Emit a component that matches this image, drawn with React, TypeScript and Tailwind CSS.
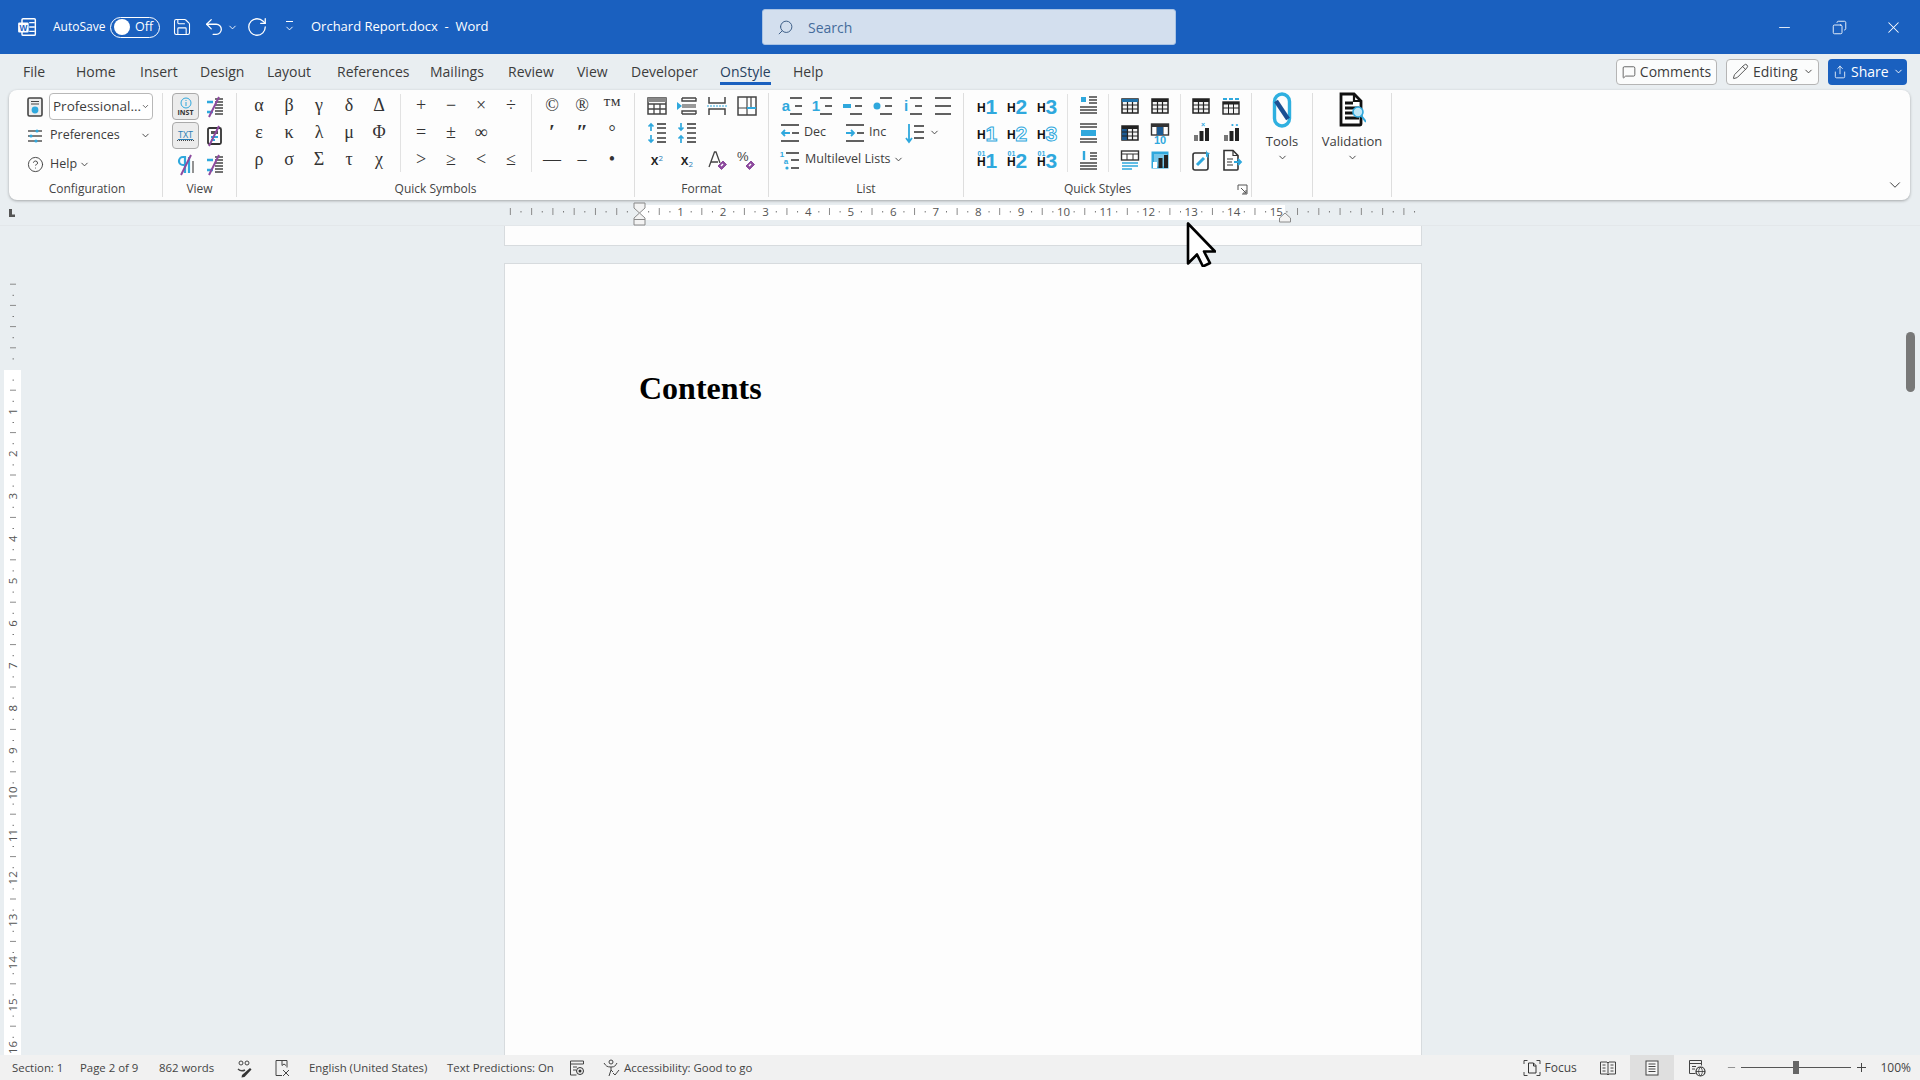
import React from "react";
import { ChevronDown, Save, Undo2, RotateCw, Search, Minus, X, Copy, MessageSquare, Pencil, Share, CircleHelp } from "lucide-react";

const D = "#3a3a3a";
const B = "#2fa8dd";
const P = "#8d4a9e";

function Svg({ s = 24, children, className }: { s?: number; children: React.ReactNode; className?: string }) {
  return <svg width={s} height={s} viewBox="0 0 24 24" fill="none" className={className}>{children}</svg>;
}
function Hl({ y, x1 = 8, x2 = 21, c = D, w = 1.6 }: { y: number; x1?: number; x2?: number; c?: string; w?: number }) {
  return <line x1={x1} x2={x2} y1={y} y2={y} stroke={c} strokeWidth={w} />;
}
const Sym = ({ c }: { c: string }) => (
  <div className={`flex items-center justify-center h-[27px] text-[#333] ${c === "′" || c === "″" ? "text-[21px] font-bold" : "text-[18px]"}`} style={{ fontFamily: "'Liberation Serif', serif" }}>{c}</div>
);
function Chev({ className = "" }: { className?: string }) {
  return <ChevronDown size={11} strokeWidth={2} className={className} />;
}
function Cell({ children }: { children: React.ReactNode }) {
  return <div className="flex items-center justify-center h-[27px]">{children}</div>;
}
function HIcon({ n, kind }: { n: number; kind: "solid" | "outline" | "num" }) {
  return (
    <Svg>
      <g style={{ fontFamily: "'Liberation Sans', sans-serif", fontWeight: 700 }}>
        <text x="2" y="18" fontSize="12" fill="#111">H</text>
        <text x="10.500" y="20" fontSize="21" fill={kind === "outline" ? "#fff" : B} stroke={kind === "outline" ? B : "none"} strokeWidth="1">{n}</text>
        {kind === "num" && <text x="2.500" y="8" fontSize="7" fill={B}>01</text>}
      </g>
    </Svg>
  );
}
function Table({ head = false, side = false }: { head?: boolean; side?: boolean }) {
  return (
    <Svg>
      <rect x="4" y="5" width="16" height="14" fill="#f4f4f4" stroke="#222" strokeWidth="1.5" />
      <rect x="4" y="5" width="16" height="3" fill={head ? "#1c6fa8" : "#222"} />
      {side && <rect x="4" y="8" width="6" height="11" fill="#1c5a92" />}
      <path d="M4 11h16M4 15h16M9.500 8v11M14.500 8v11" stroke="#222" strokeWidth="1.200" />
    </Svg>
  );
}
function Bars({ top, filled = false }: { top?: string; filled?: boolean }) {
  return (
    <Svg>
      {filled && <rect x="3.500" y="3.500" width="17" height="17" fill={B} />}
      {filled && <rect x="6" y="6" width="13" height="12.500" fill="#fff" opacity="0.35" />}
      <rect x="5" y="14" width="4" height="6" fill={filled ? "#fff" : "#777"} />
      <rect x="10.500" y="10" width="4" height="10" fill="#222" />
      <rect x="16" y="7" width="4" height="13" fill="#222" />
      {top && <text x="12" y="6" fontSize="7" fill={B} style={{ fontFamily: "'Liberation Sans', sans-serif", fontWeight: 700 }}>{top}</text>}
    </Svg>
  );
}
function Slash({ kind }: { kind: "lines" | "para" | "box" }) {
  return (
    <Svg>
      {kind === "lines" && <><path d="M13 4h8M13 7h8M13 10h8M13 13h8M13 16h8M13 19h8" stroke="#444" strokeWidth="1.300" /><path d="M5 7h6M5 17h6" stroke={B} strokeWidth="2.500" /></>}
      {kind === "para" && <><path d="M11 4H9a4 4 0 0 0 0 8h2V4zM11 4v16M15 4v16" stroke={B} strokeWidth="2.200" /><path d="M19 8v12" stroke="#777" strokeWidth="1.600" /></>}
      {kind === "box" && <><rect x="6" y="4" width="13" height="16" rx="1.500" stroke="#333" strokeWidth="1.800" /><rect x="9" y="7" width="7" height="3" fill="#555" /><path d="M9 13h7M9 16h4" stroke={B} strokeWidth="2" /></>}
      <line x1="7" y1="22" x2="17" y2="2" stroke={P} strokeWidth="2" />
    </Svg>
  );
}
function Group({ w, label, children, noBorder, labelPad = "" }: { w: string; label: React.ReactNode; children: React.ReactNode; noBorder?: boolean; labelPad?: string }) {
  return (
    <div className={`flex flex-col my-[3px] shrink-0 ${w} ${noBorder ? "" : "border-r border-[#dedede]"}`}>
      <div className="h-[81px] -mt-[1px] flex">{children}</div>
      <div className={`mt-[9px] h-[14px] relative flex items-center justify-center text-[12px] text-[#444] leading-none ${labelPad}`}>{label}</div>
    </div>
  );
}
const Sep = ({ m = "ml-[5px] mr-[5px]" }: { m?: string }) => <div className={`w-px h-[78px] bg-[#e2e2e2] self-center ${m}`} />;

function ListIcon({ mark }: { mark: React.ReactNode }) {
  return (
    <Svg>
      {mark}
      <Hl y={4} x1={9} x2={21} />
      <Hl y={12} x1={14} x2={21} />
      <Hl y={20} x1={9} x2={21} />
    </Svg>
  );
}
const mt = (t: string, x = 7, y = 17, fs = 15) => (
  <text x={x} y={y} textAnchor="middle" fontSize={fs} fill={B} style={{ fontFamily: "'Liberation Sans', sans-serif", fontWeight: 700 }}>{t}</text>
);
function Spacing({ up }: { up: boolean }) {
  return (
    <Svg>
      <path d="M12 7h9M12 12h9M12 17h9" stroke={D} strokeWidth="1.600" />
      <path d="M12 3h9" stroke={D} strokeWidth="1.600" />
      <path d="M12 21h9" stroke={D} strokeWidth="1.600" />
      {up ? <path d="M6 3v7M3.500 5.500 6 3l2.500 2.500M6 14v7M3.500 18.500 6 21l2.500-2.500" stroke={B} strokeWidth="1.700" /> : <path d="M6 2v7M3.500 6.500 6 9l2.500-2.500M6 22v-7M3.500 17.500 6 15l2.500 2.500" stroke={B} strokeWidth="1.700" />}
    </Svg>
  );
}

const tabs: [string, string][] = [
  ["File", "w-[53px]"], ["Home", "w-[64px]"], ["Insert", "w-[60px]"], ["Design", "w-[67px]"], ["Layout", "w-[70px]"], ["References", "w-[93px]"],
  ["Mailings", "w-[78px]"], ["Review", "w-[69px]"], ["View", "w-[54px]"], ["Developer", "w-[89px]"], ["OnStyle", "w-[73px]"], ["Help", "w-[60px]"],
];
const greek = ["α", "β", "γ", "δ", "Δ", "ε", "κ", "λ", "μ", "Φ", "ρ", "σ", "Σ", "τ", "χ"];
const math = ["+", "−", "×", "÷", "=", "±", "∞", "", ">", "≥", "<", "≤"];
const misc = ["©", "®", "™", "′", "″", "°", "—", "–", "•"];

function TitleBar() {
  return (
    <div className="h-[54px] shrink-0 bg-[#1a60bf] text-white flex items-center text-[12px]">
      <div className="w-[53px] pl-[17px] flex items-center shrink-0">
        <svg width="20" height="20" viewBox="0 0 18 18" fill="none">
          <rect x="4.500" y="1.500" width="12" height="15" rx="1" stroke="#fff" strokeWidth="1.300" />
          <path d="M11 5h5M11 9h5M11 13h5" stroke="#fff" strokeWidth="1.200" />
          <rect x="1" y="5" width="9.500" height="9" rx="1" fill="#fff" />
          <text x="2.200" y="12.500" fontSize="7.500" fontWeight="700" fill="#1a60bf" style={{ fontFamily: "'Liberation Sans', sans-serif" }}>W</text>
        </svg>
      </div>
      <span className="w-[57px] shrink-0">AutoSave</span>
      <div className="w-[50px] h-[21px] rounded-full border border-white flex items-center shrink-0 pl-[3px] gap-[5px]">
        <span className="w-[16px] h-[16px] rounded-full bg-white" />
        <span className="text-[12.5px] leading-none">Off</span>
      </div>
      <Save size={20} strokeWidth={1.300} className="ml-[12px] shrink-0" />
      <Undo2 size={22} strokeWidth={1.400} className="ml-[11px] shrink-0" />
      <Chev className="ml-[2px] shrink-0" />
      <RotateCw size={22} strokeWidth={1.400} className="ml-[8px] shrink-0" />
      <div className="ml-[17px] w-[9px] flex flex-col items-center shrink-0 gap-[1px]">
        <span className="w-[7px] h-px bg-white" />
        <Chev />
      </div>
      <span className="ml-[17px] w-[451px] shrink-0 text-[13px]">Orchard Report.docx&nbsp; -&nbsp; Word</span>
      <div className="w-[414px] h-[36px] shrink-0 rounded-[3px] bg-[#d3dfee] border border-[#a9c3e4] flex items-center pl-[14px] text-[#456c9b] text-[14px]">
        <Search size={17} strokeWidth={1.400} className="-scale-x-100 text-[#3f5f87]" />
        <span className="ml-[14px]">Search</span>
      </div>
      <div className="flex-1" />
      <Minus size={17} strokeWidth={1.200} />
      <Copy size={15} strokeWidth={1.400} className="ml-[39px] -scale-x-100" />
      <X size={19} strokeWidth={1.300} className="ml-[37px] mr-[17px]" />
    </div>
  );
}

function Tabs() {
  return (
    <div className="h-[36px] shrink-0 flex items-center pl-[23px] pr-[13px] pb-[1px] text-[14px] text-[#3c3c3c]">
      {tabs.map(([t, w]) => (
        <div key={t} className={`${w} h-full flex items-center`}>
          <span className={t === "OnStyle" ? "relative font-medium text-[#27415f] border-b-[3px] border-[#1a60bf] leading-[20px] mt-[3px]" : ""}>{t}</span>
        </div>
      ))}
      <div className="flex-1" />
      <div className="w-[101px] h-[26px] bg-white/80 border border-[#b5b5b5] rounded-[4px] flex items-center justify-center gap-[4px]">
        <MessageSquare size={14} strokeWidth={1.300} /><span>Comments</span>
      </div>
      <div className="ml-[9px] w-[93px] h-[26px] bg-white/80 border border-[#b5b5b5] rounded-[4px] flex items-center pl-[5px] gap-[4px]">
        <Pencil size={17} strokeWidth={1.200} /><span>Editing</span><Chev className="ml-[1px]" />
      </div>
      <div className="ml-[9px] w-[79px] h-[26px] bg-[#1a60bf] text-white rounded-[4px] flex items-center pl-[5px] gap-[4px]">
        <Share size={14} strokeWidth={1.400} /><span>Share</span><Chev />
      </div>
    </div>
  );
}

function Ribbon() {
  return (
    <div className="h-[110px] shrink-0 ml-[9px] mr-[10px] rounded-lg bg-[#fdfdfd] shadow-[0_1px_3px_rgba(0,0,0,0.3)] flex text-[13px] text-[#3c3c3c] relative">
      <Group w="w-[154px]" label="Configuration" labelPad="pl-[3px]">
        <div className="flex flex-col w-full pl-[16px] text-[12.500px]">
          <div className="h-[27px] shrink-0 flex items-center mt-[1px]">
            <svg width="20" height="22" viewBox="0 0 20 22" fill="none"><rect x="3" y="2" width="14" height="18" rx="1.500" fill="#eee" stroke="#444" strokeWidth="1.600" /><path d="M6 5.500h8M6 8h8" stroke="#444" strokeWidth="1.200" /><circle cx="10" cy="14" r="3.400" fill={B} /></svg>
            <div className="ml-[4px] w-[104px] h-[27px] bg-white border border-[#b8b8b8] rounded-[4px] flex items-center pl-[3px] pr-[1px] justify-between text-[13.500px]">
              <span>Professional...</span><Chev className="mr-[1px]" />
            </div>
          </div>
          <div className="h-[27px] shrink-0 flex items-center mt-[2px]">
            <svg width="20" height="20" viewBox="0 0 20 20" fill="none" className="mr-[5px]"><path d="M3 5h14M3 10h14M3 15h14" stroke="#555" strokeWidth="1.300" /><circle cx="12" cy="5" r="1.600" fill={B} /><circle cx="6" cy="10" r="1.600" fill={B} /><circle cx="11" cy="15" r="1.600" fill={B} /></svg>
            <span>Preferences</span>
            <Chev className="ml-[20px]" />
          </div>
          <div className="h-[27px] shrink-0 flex items-center mt-[2px]">
            <CircleHelp size={17} strokeWidth={1.300} className="mr-[6px] ml-[2px]" />
            <span>Help</span>
            <Chev className="ml-[2px]" />
          </div>
        </div>
      </Group>

      <Group w="w-[74px]" label="View">
        <div className="grid grid-cols-[27px_30px] pl-[9px] pt-[1px] gap-y-[2px] content-start">
          <div className="h-[27px] w-[27px] bg-[#ececec] border border-[#aaa] rounded-[4px] flex flex-col items-center justify-center leading-none">
            <svg width="12" height="12" viewBox="0 0 12 12"><circle cx="6" cy="6" r="5" fill="none" stroke={B} strokeWidth="1" /><path d="M6 5v4M6 3v1" stroke={B} /></svg>
            <span className="text-[7px] font-bold text-[#333]">INST</span>
          </div>
          <Cell><Slash kind="lines" /></Cell>
          <div className="h-[27px] w-[27px] bg-[#ececec] border border-[#aaa] rounded-[4px] flex flex-col items-center justify-center leading-none">
            <span className="text-[9px] text-[#2a7db5] underline">TXT</span>
            <span className="w-[17px] border-b border-dotted border-[#444] mt-[1px]" />
          </div>
          <Cell><Slash kind="box" /></Cell>
          <Cell><Slash kind="para" /></Cell>
          <Cell><Slash kind="lines" /></Cell>
        </div>
      </Group>

      <Group w="w-[398px]" label="Quick Symbols">
        <div className="flex pl-[7px]">
          <div className="grid grid-cols-5 w-[150px]">{greek.map((c, i) => <Sym key={i} c={c} />)}</div>
          <Sep m="ml-[6px] mr-[5px]" />
          <div className="grid grid-cols-4 w-[120px]">{math.map((c, i) => <Sym key={i} c={c} />)}</div>
          <Sep />
          <div className="grid grid-cols-3 w-[90px]">{misc.map((c, i) => <Sym key={i} c={c} />)}</div>
        </div>
      </Group>

      <Group w="w-[134px]" label="Format">
        <div className="grid grid-cols-4 w-[120px] ml-[7px] h-[81px]">
          <Cell><Svg><rect x="3" y="4" width="18" height="16" stroke="#444" strokeWidth="1.500" /><rect x="3" y="4" width="18" height="4" fill="#888" /><path d="M3 10h18M3 15h18M9 10v10M15 10v10" stroke="#444" strokeWidth="1.300" /></Svg></Cell>
          <Cell><Svg><path d="M7 4h14M7 20h14M7 4v3h14V4M7 20v-3h14v3" stroke="#444" strokeWidth="1.400" /><path d="M7 12h14" stroke="#999" strokeWidth="4" /><path d="M2 8l5 4-5 4z" fill={B} /></Svg></Cell>
          <Cell><Svg><path d="M4 3v6h16V3M4 21v-6h16v6" stroke="#444" strokeWidth="1.500" /><path d="M2 12h20" stroke={B} strokeWidth="1.200" strokeDasharray="2 1" /></Svg></Cell>
          <Cell><Svg><rect x="3" y="3" width="18" height="18" stroke="#444" strokeWidth="1.500" /><path d="M3 14h18M12 3v18M16 3v11" stroke="#444" strokeWidth="1.200" /><path d="M12 14h9" stroke={B} strokeWidth="2" /></Svg></Cell>
          <Cell><Spacing up /></Cell>
          <Cell><Spacing up={false} /></Cell>
          <div /><div />
          <Cell><span className="text-[14px] font-semibold text-[#222]">x<sup className="text-[8px] text-[#2a7db5] font-normal">2</sup></span></Cell>
          <Cell><span className="text-[14px] font-semibold text-[#222]">x<sub className="text-[8px] text-[#2a7db5] font-normal">2</sub></span></Cell>
          <Cell><Svg><path d="M4 19 9.500 4h1.500L15 15M6 14h7" stroke="#444" strokeWidth="1.300" /><path d="M13 18l5-5 3.500 3.500-5 5z" fill={P} stroke={P} /><path d="M16 18l2-2" stroke="#fff" strokeWidth="1.500" /></Svg></Cell>
          <Cell><Svg><text x="2" y="13" fontSize="13" fill="#444" style={{ fontFamily: "'Liberation Sans', sans-serif" }}>%</text><path d="M11 18l5-5 3.500 3.500-5 5z" fill={P} stroke={P} /><path d="M14 18l2-2" stroke="#fff" strokeWidth="1.500" /></Svg></Cell>
        </div>
      </Group>

      <Group w="w-[195px]" label="List">
        <div className="flex flex-col pl-[9px] text-[12.500px]">
          <div className="grid grid-cols-6 w-[180px] shrink-0">
            <Cell><ListIcon mark={mt("a", 5)} /></Cell>
            <Cell><ListIcon mark={mt("1", 5)} /></Cell>
            <Cell><ListIcon mark={<rect x="2" y="10" width="8" height="4" fill={B} />} /></Cell>
            <Cell><ListIcon mark={<circle cx="6" cy="12" r="3.500" fill={B} />} /></Cell>
            <Cell><ListIcon mark={mt("i", 5)} /></Cell>
            <Cell><Svg><Hl y={4} x1={4} x2={20} /><Hl y={12} x1={4} x2={20} /><Hl y={20} x1={4} x2={20} /></Svg></Cell>
          </div>
          <div className="h-[27px] shrink-0 flex items-center">
            <Svg><Hl y={4} x1={3} x2={21} /><Hl y={12} x1={14} x2={21} /><Hl y={20} x1={3} x2={21} /><path d="M12 12H4M7 9l-3 3 3 3" stroke={B} strokeWidth="1.800" /></Svg>
            <span className="ml-[2px] w-[39px]">Dec</span>
            <Svg><Hl y={4} x1={3} x2={21} /><Hl y={12} x1={14} x2={21} /><Hl y={20} x1={3} x2={21} /><path d="M3 12h8M8 9l3 3-3 3" stroke={B} strokeWidth="1.800" /></Svg>
            <span className="ml-[2px] w-[34px]">Inc</span>
            <Svg><Hl y={5} x1={11} x2={21} /><Hl y={11} x1={11} x2={21} /><Hl y={17} x1={11} x2={21} /><path d="M6 3v17M3 17l3 4 3-4" stroke={B} strokeWidth="1.800" /></Svg>
            <Chev className="ml-[2px]" />
          </div>
          <div className="h-[27px] shrink-0 flex items-center">
            <Svg><Hl y={5} x1={8} x2={21} /><Hl y={12} x1={13} x2={21} /><Hl y={20} x1={13} x2={21} />{mt("1", 4, 9, 8)}{mt("a", 8, 16, 8)}<circle cx="9" cy="20" r="1.600" fill={B} /></Svg>
            <span className="ml-[3px]">Multilevel Lists</span>
            <Chev className="ml-[2px]" />
          </div>
        </div>
      </Group>

      <Group w="w-[288px]" labelPad="pr-[20px]" label={<><span>Quick Styles</span><svg width="11" height="11" viewBox="0 0 11 11" fill="none" className="absolute right-[3px] top-[2px]"><path d="M1 6V1h9v9H5M4 4l5 5M9 6v3H6" stroke="#555" /></svg></>}>
        <div className="flex pl-[8px]">
          <div className="grid grid-cols-3 w-[90px]">
            {[1, 2, 3].map((n) => <Cell key={n}><HIcon n={n} kind="solid" /></Cell>)}
            {[1, 2, 3].map((n) => <Cell key={n}><HIcon n={n} kind="outline" /></Cell>)}
            {[1, 2, 3].map((n) => <Cell key={n}><HIcon n={n} kind="num" /></Cell>)}
          </div>
          <Sep />
          <div className="grid grid-cols-1 w-[30px]">
            <Cell><Svg><path d="M13 3h8M13 6h8M13 9h8M4 13h17M4 16h17M4 19h17" stroke="#444" strokeWidth="1.500" /><path d="M5 3h5v5H5z" fill={B} /></Svg></Cell>
            <Cell><Svg><path d="M4 3h17M4 6h17M4 18h17M4 21h17" stroke="#444" strokeWidth="1.500" /><rect x="5" y="9" width="15" height="6" fill={B} /></Svg></Cell>
            <Cell><Svg><path d="M14 5h7M14 8h7M14 11h7M4 15h17M4 18h17M4 21h17" stroke="#444" strokeWidth="1.500" /><path d="M8 3v9" stroke={B} strokeWidth="2.400" /></Svg></Cell>
          </div>
          <Sep m="ml-[5px] mr-[6px]" />
          <div className="grid grid-cols-2 w-[60px]">
            <Cell><Table head /></Cell><Cell><Table /></Cell>
            <Cell><Table side /></Cell>
            <Cell><Svg><rect x="3.500" y="3" width="17" height="11" fill="#fff" stroke="#333" strokeWidth="1.400" /><rect x="3.500" y="3" width="17" height="3" fill="#333" /><path d="M9 6v8M15 6v8" stroke="#333" /><rect x="9" y="6" width="6" height="8" fill="#1c5a92" /><text x="12" y="23" textAnchor="middle" fontSize="11" fontWeight="700" fill={B} style={{ fontFamily: "'Liberation Sans', sans-serif" }}>10</text></Svg></Cell>
            <Cell><Svg><rect x="3.500" y="3" width="17" height="9" fill="#fff" stroke="#333" strokeWidth="1.400" /><path d="M3.500 6h17M9 6v6M15 6v6" stroke="#333" /><path d="M4 15h16M4 18h16M4 21h10" stroke={B} strokeWidth="1.400" /></Svg></Cell>
            <Cell><Bars filled /></Cell>
          </div>
          <Sep />
          <div className="grid grid-cols-2 w-[60px]">
            <Cell><Table /></Cell>
            <Cell><Svg><rect x="4" y="8" width="16" height="12" fill="#f4f4f4" stroke="#222" strokeWidth="1.400" /><rect x="4" y="8" width="16" height="2.500" fill="#222" /><path d="M4 14h16M9.500 10v10M14.500 10v10" stroke="#222" /><path d="M4 5h4M10 5h4M16 5h4" stroke={B} strokeWidth="2" /></Svg></Cell>
            <Cell><Bars top="×" /></Cell>
            <Cell><Bars top="• •" /></Cell>
            <Cell><Svg><rect x="4" y="5" width="15" height="17" rx="2" stroke="#333" strokeWidth="1.600" /><path d="M8 17l7-7" stroke={B} strokeWidth="3" /><path d="M17 2l1.200 2.500L21 5l-2 2 .5 3-2.500-1.500" fill={B} /></Svg></Cell>
            <Cell><Svg><path d="M5 2.500h9l5 5V21a1 1 0 0 1-1 1H5z" fill="#fff" stroke="#333" strokeWidth="1.600" /><path d="M14 2.500v5h5M8 11h6M8 14h5M8 17h6" stroke="#333" strokeWidth="1.200" /><path d="M15 14h7M19 11l3 3-3 3" stroke={B} strokeWidth="1.800" /></Svg></Cell>
          </div>
        </div>
      </Group>

      <Group w="w-[61px]" label="">
        <div className="flex flex-col items-center w-full">
          <svg width="22" height="36" viewBox="0 0 22 36" fill="none">
            <rect x="3.500" y="2" width="15" height="32" rx="7.500" stroke="#2fb0e0" strokeWidth="3.400" />
            <path d="M5 9 17 27" stroke="#1b4f92" strokeWidth="4.500" />
          </svg>
          <span className="mt-[5px] leading-[16px]">Tools</span>
          <Chev className="mt-[3px]" />
        </div>
      </Group>

      <Group w="w-[79px]" label="">
        <div className="flex flex-col items-center w-full">
          <svg width="28" height="36" viewBox="0 0 28 36" fill="none">
            <path d="M3 2h13l7 7v23a1 1 0 0 1-1 1H3z" fill="#fff" stroke="#111" strokeWidth="2.800" />
            <path d="M16 2v7h7" stroke="#111" strokeWidth="2.200" />
            <path d="M7 11h8M7 16h14M7 21h8M7 26h14" stroke="#111" strokeWidth="3" />
            <circle cx="20" cy="20" r="5" fill="#bfe7f7" stroke={B} strokeWidth="1.600" />
            <path d="M23.500 24 28 30" stroke={B} strokeWidth="2" />
          </svg>
          <span className="mt-[5px] leading-[16px]">Validation</span>
          <Chev className="mt-[3px]" />
        </div>
      </Group>

      <div className="flex-1 flex justify-end items-end pr-[6px] pb-[6px]">
        <ChevronDown size={18} strokeWidth={1.300} />
      </div>
    </div>
  );
}

function HRuler() {
  const u = 42.55, o = 638;
  const marks: React.ReactNode[] = [];
  for (let q = -24; q <= 74; q++) {
    const i = q / 4;
    const x = o + i * u;
    if (x < 508 || x > 1415 || q === 0) continue;
    if (q % 4 === 0 && i > 0 && i <= 15) {
      marks.push(<text key={q} x={x} y={216} textAnchor="middle" fontSize="11.500" fill="#555" style={{ fontFamily: "'Open Sans', sans-serif" }}>{i}</text>);
    } else if (q % 2 === 0) {
      marks.push(<line key={q} x1={x} x2={x} y1={208} y2={215} stroke="#8a8a8a" />);
    } else {
      marks.push(<rect key={q} x={x - 0.5} y={211} width={1} height={1.500} fill="#777" />);
    }
  }
  return (
    <div className="h-[26px] shrink-0 border-b border-[#e3e7ea]">
      <svg width="1920" height="26" viewBox="0 200 1920 26" className="block">
        <rect x="639" y="205" width="646" height="15" fill="#fff" />
        <path d="M9 209v8h6v-2.500h-3V209z" fill="#555" />
        {marks}
        <path d="M634 203h11v5l-5.500 5-5.500-5z" fill="#f3f3f3" stroke="#8a8a8a" />
        <path d="M639.500 213l5.500 5v7h-11v-7z" fill="#f3f3f3" stroke="#8a8a8a" />
        <path d="M634 219.500h11" stroke="#8a8a8a" />
        <path d="M1285 213l5.500 5v4h-11v-4z" fill="#f3f3f3" stroke="#8a8a8a" />
      </svg>
    </div>
  );
}

function VRuler() {
  const u = 42.4, o = 369 - 226;
  const marks: React.ReactNode[] = [];
  for (let q = -12; q <= 64; q++) {
    const v = q / 4;
    const y = o + v * u;
    if (y < 55 || q === 0) continue;
    if (q % 4 === 0 && v > 0) {
      marks.push(<text key={q} transform={`translate(17 ${y}) rotate(-90)`} textAnchor="middle" fontSize="11.500" fill="#555" style={{ fontFamily: "'Open Sans', sans-serif" }}>{v}</text>);
    } else if (q % 2 === 0) {
      marks.push(<line key={q} x1={10} x2={16} y1={y} y2={y} stroke="#8a8a8a" />);
    } else {
      marks.push(<rect key={q} x={12.500} y={y} width={1.500} height={1} fill="#777" />);
    }
  }
  return (
    <svg width="26" height="829" viewBox="0 0 26 829" className="block shrink-0">
      <rect x="4" y="144" width="17" height="685" fill="#fff" />
      {marks}
    </svg>
  );
}

function StatusBar() {
  return (
    <div className="h-[25px] shrink-0 bg-[#f1f1f1] flex items-center pl-[12px] text-[11.400px] text-[#444] whitespace-nowrap">
      <span className="w-[68px]">Section: 1</span>
      <span className="w-[79px]">Page 2 of 9</span>
      <span className="w-[75px]">862 words</span>
      <svg width="20" height="20" viewBox="0 0 20 20" fill="none"><circle cx="7" cy="5" r="2" stroke="#444" /><circle cx="13" cy="5" r="2" stroke="#444" /><path d="M4 11c2 2 5 2 7 1" stroke="#444" strokeWidth="1.400" /><path d="M8 17l8-7 1.500 1.500-7 7.500-3 .5z" fill="#333" /></svg>
      <svg width="20" height="20" viewBox="0 0 20 20" fill="none" className="ml-[18px]"><path d="M4 2.500h11v7M4 2.500v15h6M10 2.500v5l2-1.500 2 1.500" stroke="#444" /><path d="M11 12l6 6M17 12l-6 6" stroke="#444" /></svg>
      <span className="ml-[17px] w-[138px]">English (United States)</span>
      <span className="w-[121px]">Text Predictions: On</span>
      <svg width="18" height="18" viewBox="0 0 18 18" fill="none"><path d="M2.500 2h13v3h-13zM2.500 5v11h6" stroke="#444" /><path d="M5 8h4M5 11h3" stroke="#444" /><circle cx="12" cy="12" r="3.500" stroke="#333" /><circle cx="12" cy="12" r="1.500" fill="#333" /></svg>
      <svg width="18" height="20" viewBox="0 0 18 20" fill="none" className="ml-[17px]"><circle cx="8" cy="4" r="2" stroke="#444" /><path d="M1 5c2 3 3 4 7 4s4-1 6-4M8 9v3l-2 6M8 12l2 2" stroke="#444" /><path d="M10 15l2 2 4-5" stroke="#444" /></svg>
      <span className="ml-[3px]">Accessibility: Good to go</span>
      <div className="flex-1" />
      <svg width="18" height="18" viewBox="0 0 18 18" fill="none"><path d="M1 5V1.500h3.500M13.500 1.500H17V5M17 13v3.500h-3.500M4.500 16.500H1V13" stroke="#444" /><path d="M5.500 4h5l2.500 2.500v7.500h-7.500zM10.500 4v3h2.500" stroke="#333" /></svg>
      <span className="ml-[3px] w-[55px] text-[12px]">Focus</span>
      <svg width="18" height="16" viewBox="0 0 18 16" fill="none"><path d="M1.500 2h6.500l1 1 1-1h6.500v12h-6.500l-1 1-1-1H1.500zM9 3v11M3.500 5h3M3.500 8h3M3.500 11h3M11.500 5h3M11.500 8h3M11.500 11h3" stroke="#444" /></svg>
      <div className="ml-[13px] w-[44px] h-[25px] bg-[#dfdfdf] flex items-center justify-center">
        <svg width="14" height="16" viewBox="0 0 14 16" fill="none"><rect x="1" y="1" width="12" height="14" fill="#f6f6f6" stroke="#444" /><path d="M3.500 4h7M3.500 6.500h7M3.500 9h7M3.500 11.500h7" stroke="#444" /></svg>
      </div>
      <svg width="18" height="18" viewBox="0 0 18 18" fill="none" className="ml-[14px]"><path d="M1.500 1.500h12v5M1.500 1.500v13h6M1.500 4.500h12M4 7.500h4M4 10h3" stroke="#444" /><circle cx="12.500" cy="12.500" r="4.500" fill="#f1f1f1" stroke="#333" strokeWidth="1.200" /><path d="M8 12.500h9M12.500 8c-2.500 3-2.500 6 0 9M12.500 8c2.500 3 2.500 6 0 9" stroke="#333" strokeWidth=".8" /></svg>
      <Minus size={11} strokeWidth={1.200} className="ml-[20px]" />
      <div className="ml-[4px] w-[110px] h-[13px] flex items-center justify-center relative">
        <div className="w-full h-px bg-[#555]" />
        <div className="absolute w-[6px] h-[13px] bg-[#666]" />
      </div>
      <svg width="11" height="11" viewBox="0 0 11 11" className="ml-[5px]"><path d="M5.500 1v9M1 5.500h9" stroke="#444" /></svg>
      <span className="ml-[13px] mr-[9px] text-[12px]">100%</span>
    </div>
  );
}

export default function App() {
  return (
    <div className="relative w-[1920px] h-[1080px] overflow-hidden flex flex-col bg-[#e9eef1]" style={{ fontFamily: "'Open Sans', 'Noto Sans', sans-serif" }}>
      <TitleBar />
      <Tabs />
      <Ribbon />
      <HRuler />
      <div className="flex-1 min-h-0 flex">
        <VRuler />
        <div className="ml-[478px] w-[918px] shrink-0 flex flex-col">
          <div className="h-[20px] shrink-0 bg-[#fdfdfd] border border-t-0 border-[#d7dbde]" />
          <div className="mt-[17px] flex-1 bg-[#fdfdfd] border border-b-0 border-[#d7dbde] pl-[134px] pt-[104px]">
            <div className="text-[32px] leading-[40px] font-bold text-black" style={{ fontFamily: "'Liberation Serif', serif" }}>Contents</div>
          </div>
        </div>
        <div className="flex-1" />
        <div className="w-[9px] h-[60px] mt-[106px] mr-[5px] rounded-full bg-[#787878]" />
      </div>
      <StatusBar />
      <svg width="30" height="45" viewBox="0 0 30 45" className="absolute left-[1186px] top-[222px]">
        <path d="M2 1.500v40l9-9 6 12 7-3.500-6-11.500h11z" fill="#fff" stroke="#000" strokeWidth="2.600" strokeLinejoin="round" />
      </svg>
    </div>
  );
}
